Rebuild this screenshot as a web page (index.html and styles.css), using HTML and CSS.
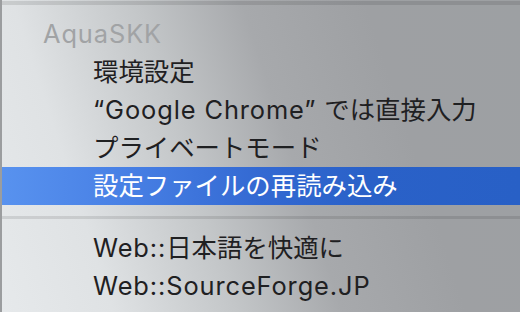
FILE: index.html
```html
<!DOCTYPE html>
<html lang="ja">
<head>
<meta charset="utf-8">
<link rel="stylesheet" href="styles.css">
</head>
<body>
<div class="menu">
  <div class="sep sep-top"></div>
  <div class="header"><span class="latin">AquaSKK</span></div>
  <ul class="items">
    <li class="item">環境設定</li>
    <li class="item"><span class="latin">“Google Chrome” </span>では直接入力</li>
    <li class="item">プライベートモード</li>
    <li class="item active">設定ファイルの再読み込み</li>
  </ul>
  <div class="sep sep-mid"></div>
  <ul class="items">
    <li class="item"><span class="latin">Web::</span>日本語を快適に</li>
    <li class="item"><span class="latin">Web::SourceForge.JP</span></li>
  </ul>
</div>
</body>
</html>
```
FILE: styles.css
```css
html, body {
  margin: 0;
  padding: 0;
}
body {
  width: 520px;
  height: 312px;
  overflow: hidden;
  font-family: Inter, "Noto Sans CJK JP", sans-serif;
}
.menu {
  width: 520px;
  height: 312px;
  box-sizing: border-box;
  border-left: 2px solid #9b9d9f;
  background: linear-gradient(72deg, #e6e9eb 0%, #dfe2e4 18%, #c3c6c8 38%, #a7a9ac 55%, #9ea0a3 75%, #9da0a3 100%);
  display: flex;
  flex-direction: column;
  overflow: hidden;
}
.sep {
  height: 4px;
  background: rgba(0, 0, 0, 0.1);
  flex: none;
}
.sep-top {
  margin-top: 1px;
  margin-bottom: 10px;
}
.sep-mid {
  height: 3px;
  margin-top: 11px;
  margin-bottom: 10px;
}
.header {
  height: 38px;
  line-height: 38px;
  padding-left: 41px;
  font-size: 25.4px;
  color: #a1a3a5;
  flex: none;
}
.latin {
  letter-spacing: 0.9px;
}
.items {
  list-style: none;
  margin: 0;
  padding: 0;
  display: flex;
  flex-direction: column;
}
.item {
  height: 38px;
  line-height: 38px;
  padding-left: 91px;
  font-size: 25.4px;
  color: #1f2022;
  white-space: nowrap;
}
.item.active {
  color: #ffffff;
  background: linear-gradient(90deg, #5892ef 0%, #477fe4 25%, #3369d2 50%, #2a61c8 70%, #2860c6 100%);
}
```
